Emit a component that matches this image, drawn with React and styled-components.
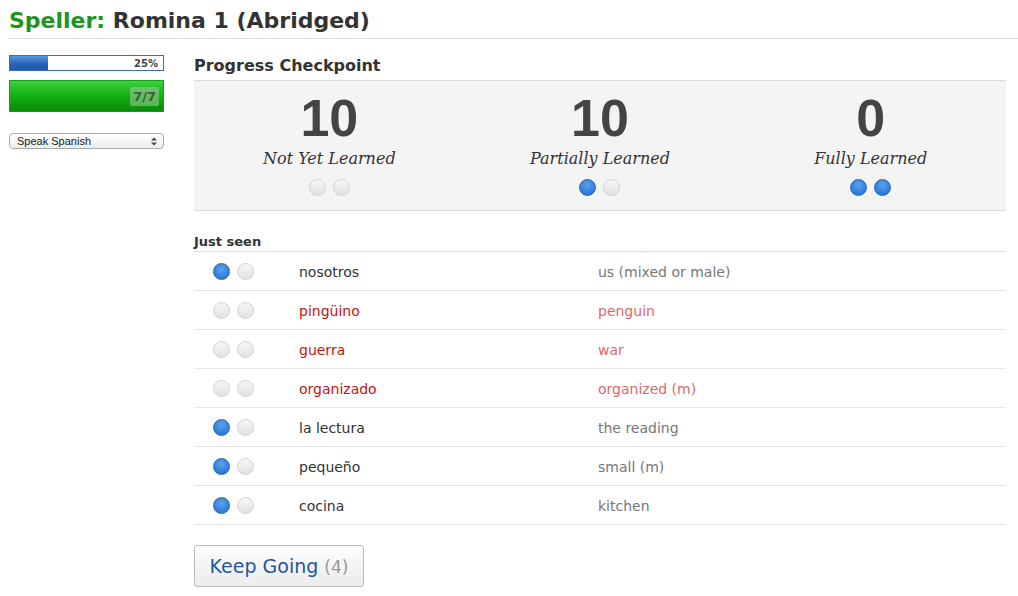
import styled, { createGlobalStyle } from "styled-components";

const GlobalStyle = createGlobalStyle`
  html, body {
    margin: 0;
    padding: 0;
    background: #fff;
  }
  body {
    font-family: "DejaVu Sans", "Liberation Sans", sans-serif;
    color: #333;
  }
`;

const Page = styled.div`
  width: 1018px;
  height: 596px;
  overflow: hidden;
  padding: 0 0 0 9px;
  box-sizing: border-box;
`;

const Title = styled.h1`
  margin: 0;
  padding: 6px 0 3px 0;
  font-family: "DejaVu Sans", sans-serif;
  font-size: 22px;
  font-weight: bold;
  color: #333;
  border-bottom: 1px solid #ddd;
  line-height: 29px;

  & span {
    color: #1e961e;
  }
`;

const Body = styled.div`
  display: flex;
  gap: 30px;
  padding-top: 16px;
`;

const Sidebar = styled.aside`
  width: 155px;
  display: flex;
  flex-direction: column;
`;

const ProgressBar = styled.div`
  position: relative;
  height: 16px;
  box-sizing: border-box;
  border: 1px solid #2f6fc4;
  background: #fff;
  font-size: 10px;
  font-weight: bold;
  color: #444;
  display: flex;
  align-items: center;
  justify-content: flex-end;
  padding-right: 5px;

  & .fill {
    position: absolute;
    left: 0;
    top: 0;
    bottom: 0;
    background: linear-gradient(#5a95dc, #2a66b8 55%, #1f57a3);
  }
  & .label {
    position: relative;
  }
`;

const ScoreBar = styled.div`
  margin-top: 9px;
  height: 32px;
  box-sizing: border-box;
  border: 1px solid #1a9a1a;
  background: linear-gradient(#3bd23b, #16b316 45%, #078c07);
  display: flex;
  align-items: center;
  justify-content: flex-end;
  padding-right: 4px;

  & span {
    background: rgba(160, 200, 160, 0.55);
    color: #3d5a3d;
    font-weight: bold;
    font-size: 13px;
    padding: 2px 3px;
    border-radius: 2px;
  }
`;

const Select = styled.div`
  margin-top: 21px;
  height: 16px;
  box-sizing: border-box;
  border: 1px solid #aaa;
  border-radius: 4px;
  background: linear-gradient(#fff, #ececec);
  color: #222;
  display: flex;
  align-items: center;
  justify-content: space-between;
  padding: 0 6px 0 7px;
  font-family: "Liberation Sans", sans-serif;
  font-size: 11px;

  & svg {
    width: 6px;
    height: 9px;
  }
`;

const Main = styled.main`
  width: 812px;
`;

const SectionTitle = styled.h2`
  margin: 0;
  font-size: 16px;
  font-weight: bold;
  line-height: 22px;
  color: #333;
`;

const Checkpoint = styled.div`
  margin-top: 3px;
  height: 131px;
  box-sizing: border-box;
  background: #f4f4f4;
  border-top: 1px solid #ddd;
  border-bottom: 1px solid #ddd;
  display: grid;
  grid-template-columns: repeat(3, 1fr);
`;

const Stat = styled.div`
  display: flex;
  flex-direction: column;
  align-items: center;
  padding-top: 8px;

  & .num {
    font-family: "Liberation Sans", sans-serif;
    font-weight: bold;
    font-size: 52px;
    line-height: 58px;
    color: #444;
  }
  & .label {
    margin-top: 2px;
    font-family: "DejaVu Serif", "Liberation Serif", serif;
    font-style: italic;
    font-size: 16px;
    line-height: 20px;
    color: #333;
  }
`;

const Dots = styled.div`
  display: flex;
  gap: 7px;
  margin-top: ${(p) => p.$mt || 0}px;
`;

const Dot = styled.span`
  width: 17px;
  height: 17px;
  box-sizing: border-box;
  border-radius: 50%;
  background: ${(p) =>
    p.$on
      ? "radial-gradient(circle at 50% 35%, #5aa2ee, #2f7bd6 70%)"
      : "linear-gradient(#f6f6f6, #e2e2e2)"};
  border: 1px solid ${(p) => (p.$on ? "#2866b5" : "#d2d2d2")};
`;

const SubTitle = styled.h3`
  margin: 22px 0 0 0;
  font-size: 13px;
  font-weight: bold;
  line-height: 18px;
  color: #333;
  border-bottom: 1px solid #ddd;
`;

const Row = styled.div`
  display: grid;
  grid-template-columns: 105px 299px 1fr;
  height: 39px;
  box-sizing: border-box;
  border-bottom: 1px solid #e4e4e4;
  align-items: center;
  font-size: 14px;
  padding-top: 1px;

  & .dots {
    padding-left: 19px;
    margin-top: -1px;
  }
  & .word {
    color: ${(p) => (p.$wrong ? "#c41414" : "#333")};
  }
  & .meaning {
    color: ${(p) => (p.$wrong ? "#dd6a6a" : "#777")};
  }
`;

const Button = styled.button`
  margin-top: 20px;
  width: 170px;
  height: 42px;
  border: 1px solid #bbb;
  border-radius: 3px;
  background: linear-gradient(#fdfdfd, #ececec);
  font-family: "DejaVu Sans", sans-serif;
  font-size: 19px;
  color: #1f56a3;
  padding: 0;

  & span {
    color: #999;
    font-size: 17px;
  }
`;

const words = [
  { es: "nosotros", en: "us (mixed or male)", level: 1 },
  { es: "pingüino", en: "penguin", level: 0, wrong: true },
  { es: "guerra", en: "war", level: 0, wrong: true },
  { es: "organizado", en: "organized (m)", level: 0, wrong: true },
  { es: "la lectura", en: "the reading", level: 1 },
  { es: "pequeño", en: "small (m)", level: 1 },
  { es: "cocina", en: "kitchen", level: 1 },
];

const stats = [
  { n: 10, label: "Not Yet Learned", level: 0 },
  { n: 10, label: "Partially Learned", level: 1 },
  { n: 0, label: "Fully Learned", level: 2 },
];

function DotPair({ level, mt }) {
  return (
    <Dots $mt={mt}>
      <Dot $on={level > 0} />
      <Dot $on={level > 1} />
    </Dots>
  );
}

export default function App() {
  return (
    <Page>
      <GlobalStyle />
      <Title>
        <span>Speller:</span> Romina 1 (Abridged)
      </Title>
      <Body>
        <Sidebar>
          <ProgressBar>
            <div className="fill" style={{ width: "25%" }} />
            <span className="label">25%</span>
          </ProgressBar>
          <ScoreBar>
            <span>7/7</span>
          </ScoreBar>
          <Select>
            Speak Spanish
            <svg viewBox="0 0 6 9">
              <path d="M0 3.5 L3 0.5 L6 3.5 Z M0 5.5 L3 8.5 L6 5.5 Z" fill="#444" />
            </svg>
          </Select>
        </Sidebar>
        <Main>
          <SectionTitle>Progress Checkpoint</SectionTitle>
          <Checkpoint>
            {stats.map((s) => (
              <Stat key={s.label}>
                <div className="num">{s.n}</div>
                <div className="label">{s.label}</div>
                <DotPair level={s.level} mt={10} />
              </Stat>
            ))}
          </Checkpoint>
          <SubTitle>Just seen</SubTitle>
          {words.map((w) => (
            <Row key={w.es} $wrong={w.wrong}>
              <div className="dots">
                <DotPair level={w.level} />
              </div>
              <div className="word">{w.es}</div>
              <div className="meaning">{w.en}</div>
            </Row>
          ))}
          <Button>
            Keep Going <span>(4)</span>
          </Button>
        </Main>
      </Body>
    </Page>
  );
}
